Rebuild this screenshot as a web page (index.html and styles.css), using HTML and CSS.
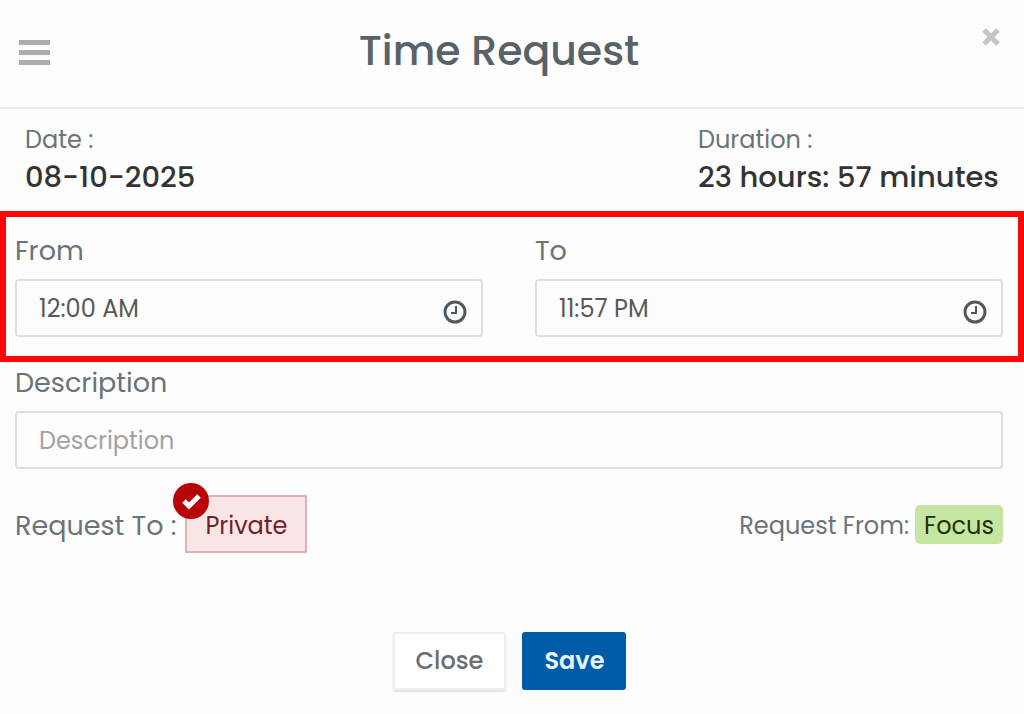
FILE: index.html
```
<!DOCTYPE html>
<html lang="en">
<head>
  <meta charset="utf-8">
  <meta name="viewport" content="width=device-width, initial-scale=1">
  <title>Time Request</title>
  <link rel="stylesheet" href="styles.css">
</head>
<body>

<form class="modal">
  <header class="modal-header">
    <button type="button" class="icon-btn" aria-label="Menu">
      <svg width="32" height="28" viewBox="0 0 32 28" fill="#adadad">
        <rect x="1" y="0" width="31" height="5"/>
        <rect x="1" y="10" width="31" height="5"/>
        <rect x="1" y="20" width="31" height="5"/>
      </svg>
    </button>
    <h1 class="modal-title">Time Request</h1>
    <button type="button" class="icon-btn icon-close" aria-label="Close dialog">
      <svg width="18" height="18" viewBox="0 0 18 18" stroke="#c4c4c4" stroke-width="5">
        <path d="M2 2L16 16M16 2L2 16"/>
      </svg>
    </button>
  </header>

  <section class="summary">
    <div>
      <div class="summary-label">Date :</div>
      <div class="summary-value">08-10-2025</div>
    </div>
    <div class="summary-duration">
      <div class="summary-label">Duration :</div>
      <div class="summary-value">23 hours: 57 minutes</div>
    </div>
  </section>

  <section class="time-range">
    <div class="field">
      <label for="from">From</label>
      <div class="input-wrap">
        <input type="text" id="from" value="12:00 AM">
        <svg class="clock" width="24" height="24" viewBox="0 0 24 24" fill="none" stroke="#50585d">
          <circle cx="12" cy="12" r="10" stroke-width="3"/>
          <path d="M13 6V13H8" stroke-width="2"/>
        </svg>
      </div>
    </div>
    <div class="field">
      <label for="to">To</label>
      <div class="input-wrap">
        <input type="text" id="to" value="11:57 PM">
        <svg class="clock" width="24" height="24" viewBox="0 0 24 24" fill="none" stroke="#50585d">
          <circle cx="12" cy="12" r="10" stroke-width="3"/>
          <path d="M13 6V13H8" stroke-width="2"/>
        </svg>
      </div>
    </div>
  </section>

  <section class="field description">
    <label for="description">Description</label>
    <input type="text" id="description" placeholder="Description">
  </section>

  <section class="request">
    <div class="request-to">
      <span>Request To :</span>
      <button type="button" class="tag-private" aria-pressed="true">
        Private
        <svg class="check" width="36" height="36" viewBox="0 0 36 36" fill="none">
          <circle cx="18" cy="18" r="18" fill="#b90407"/>
          <path d="M11 18L16 23L26 13" stroke="#fff" stroke-width="5"/>
        </svg>
      </button>
    </div>
    <div class="request-from">
      <span>Request From:</span>
      <span class="tag-focus">Focus</span>
    </div>
  </section>

  <footer class="actions">
    <button type="button" class="btn btn-close">Close</button>
    <button type="submit" class="btn btn-save">Save</button>
  </footer>
</form>

</body>
</html>
```
FILE: styles.css
```
* {
  box-sizing: border-box;
}

body {
  margin: 0;
  background: #fdfdfd;
  color: #6a7378;
  font-family: Poppins, Inter, sans-serif;
  font-size: 24px;
  line-height: 36px;
}

button, input {
  font: inherit;
}

button {
  cursor: pointer;
}

.modal-header {
  display: flex;
  align-items: center;
  height: 109px;
  padding: 0 24px 0 18px;
  border-bottom: 2px solid #eceeef;
}

.modal-title {
  flex: 1;
  margin: 0;
  padding: 0 34px 5px 0;
  color: #596267;
  font-size: 41px;
  font-weight: 500;
  line-height: 60px;
  text-align: center;
}

.icon-btn {
  display: flex;
  padding: 0;
  border: 0;
  background: none;
}

.icon-close {
  align-self: flex-start;
  margin-top: 28px;
}

.summary {
  display: flex;
  justify-content: space-between;
  padding: 13px 21px 15px 25px;
}

.summary-duration {
  min-width: 305px;
}

.summary-value {
  color: #333;
  font-size: 29px;
  font-weight: 500;
  line-height: 38px;
}

.time-range {
  display: grid;
  grid-template-columns: 1fr 1fr;
  gap: 52px;
  padding: 16px 15px 19px 9px;
  border: 6px solid #ff0505;
}

.field label {
  display: block;
  margin-bottom: 10px;
  font-size: 27px;
  line-height: 36px;
}

.input-wrap {
  position: relative;
}

.field input {
  display: block;
  width: 100%;
  height: 58px;
  padding: 0 22px;
  border: 2px solid #dcdfe2;
  border-radius: 4px;
  background: #fdfdfd;
  color: #585858;
}

.field input::placeholder {
  color: #a2a2a2;
  opacity: 1;
}

.clock {
  position: absolute;
  right: 16px;
  top: 21px;
}

.description {
  padding: 3px 21px 0 15px;
}

.request {
  display: flex;
  align-items: center;
  justify-content: space-between;
  padding: 26px 21px 0 15px;
}

.request-to, .request-from {
  display: flex;
  align-items: center;
}

.request-to {
  gap: 9px;
  font-size: 27px;
}

.request-from {
  gap: 6px;
}

.request-to > span, .request-from > span {
  padding-top: 3px;
}

.tag-private {
  position: relative;
  height: 58px;
  padding: 3px 18px 0;
  border: 2px solid #e2b0b4;
  background: #fae5e6;
  color: #701f28;
  font-size: 24px;
}

.check {
  position: absolute;
  left: -14px;
  top: -14px;
}

.request-from .tag-focus {
  padding: 2px 9px 0;
  border-radius: 5px;
  background: #c5e6a0;
  color: #1d3209;
  line-height: 37px;
}

.actions {
  display: flex;
  justify-content: center;
  gap: 16px;
  padding: 79px 5px 22px 0;
}

.btn {
  height: 58px;
  padding: 0 20px;
  border: 2px solid transparent;
  border-radius: 3px;
  font-weight: 500;
}

.btn-close {
  padding: 0 21px;
  border-color: #eceeef;
  background: #fff;
  box-shadow: 0 2px 2px #dfe2e3;
  color: #6b6f73;
}

.btn-save {
  background: #005ba8;
  color: #e8f5ff;
  font-weight: 600;
}
```
